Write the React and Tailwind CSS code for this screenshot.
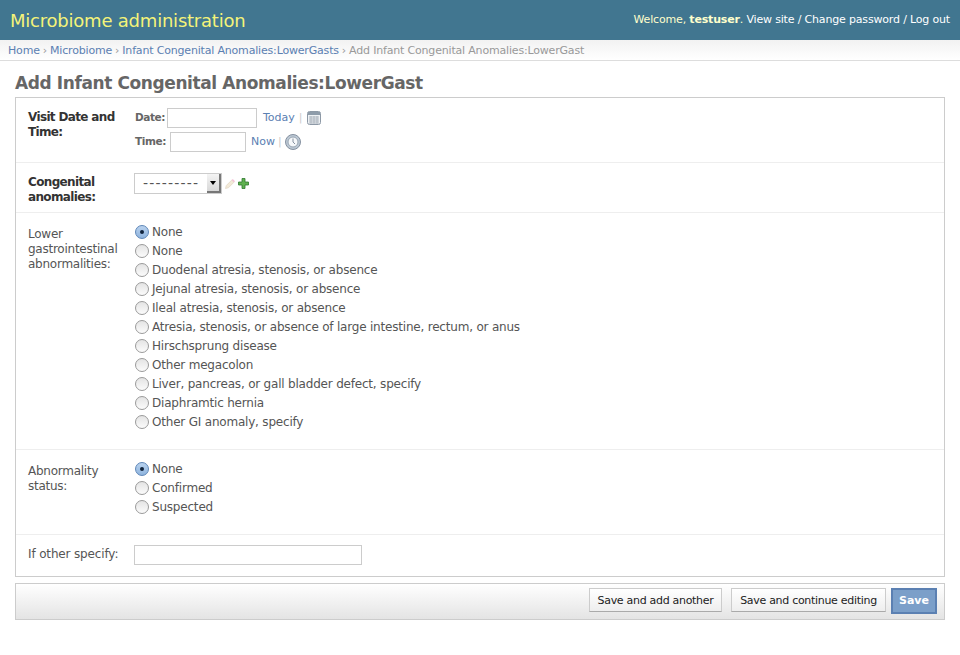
// Django admin add form: header, breadcrumbs, fieldset rows, submit bar
const gastroOptions = [
  'None',
  'None',
  'Duodenal atresia, stenosis, or absence',
  'Jejunal atresia, stenosis, or absence',
  'Ileal atresia, stenosis, or absence',
  'Atresia, stenosis, or absence of large intestine, rectum, or anus',
  'Hirschsprung disease',
  'Other megacolon',
  'Liver, pancreas, or gall bladder defect, specify',
  'Diaphramtic hernia',
  'Other GI anomaly, specify',
];

const statusOptions = ['None', 'Confirmed', 'Suspected'];

const Radio = ({ checked }) => (
  <span className={`w-[14px] h-[14px] rounded-full shrink-0 flex items-center justify-center border ${checked ? 'border-[#5d86b8] bg-gradient-to-b from-[#b9d2ee] to-[#8fb4de]' : 'border-[#9a9a9a] bg-gradient-to-b from-[#e4e4e4] to-[#fbfbfb]'}`}>
    {checked && <span className="w-[4px] h-[4px] rounded-full bg-[#10233c]"></span>}
  </span>
);

const RadioList = ({ options }) => (
  <ul className="flex flex-col">
    {options.map((label, i) => (
      <li key={i} className="h-[19px] flex items-center gap-[3px] pl-[1px] text-[12px] tracking-[-0.2px] text-[#555]">
        <Radio checked={i === 0} />
        <span>{label}</span>
      </li>
    ))}
  </ul>
);

const CalendarIcon = () => (
  <svg width="16" height="16" viewBox="0 0 16 16">
    <rect x="1.5" y="1.5" width="13" height="13" rx="2" fill="#eef1f4" stroke="#8d99a6" />
    <rect x="2" y="2" width="12" height="3" fill="#8e9caa" />
    <path d="M3 7h10M3 9h10M3 11h10M3 13h10M5 6v7.5M8 6v7.5M11 6v7.5" stroke="#aeb6bf" strokeWidth="1" />
  </svg>
);

const ClockIcon = () => (
  <svg width="16" height="16" viewBox="0 0 16 16">
    <circle cx="8" cy="8" r="7.5" fill="#bcc8d4" stroke="#8591a0" />
    <circle cx="8" cy="8" r="5" fill="#f6f8fa" stroke="#98a5b3" />
    <path d="M8 4.5v3.5l2 2" fill="none" stroke="#8591a0" strokeWidth="1" />
  </svg>
);

const PencilIcon = () => (
  <svg width="12" height="12" viewBox="0 0 12 12">
    <path d="M1.5 10.5l.8-3 5.5-5.5 2.2 2.2-5.5 5.5z" fill="#f3ead8" stroke="#e3d8c6" strokeWidth="0.8" />
    <path d="M7.8 2l1-1 2.2 2.2-1 1z" fill="#f4bfd6" />
  </svg>
);

const PlusIcon = () => (
  <svg width="11" height="11" viewBox="0 0 11 11">
    <path d="M4 .5h3v3.5h3.5v3h-3.5v3.5h-3v-3.5h-3.5v-3h3.5z" fill="#5fb04f" stroke="#2f7a2f" strokeWidth="0.8" />
  </svg>
);

const App = () => {
  return (
    <div className="min-h-[655px] bg-white text-[12px] font-['DejaVu_Sans',sans-serif]">

      {/* header */}
      <div className="h-[40px] bg-[#417690] flex items-center justify-between pl-[10px] pr-[10px]">
        <h1 className="text-[18px] text-[#f4f379] tracking-[-0.22px]">Microbiome administration</h1>
        <div className="pt-[1px] text-[11px] tracking-[-0.17px] text-[#ffc]">
          Welcome, <strong className="font-bold">testuser</strong>.{' '}
          <span className="text-white">View site / Change password / Log out</span>
        </div>
      </div>

      {/* breadcrumbs */}
      <div className="h-[21px] pt-[2px] border-b border-[#ddd] bg-gradient-to-b from-[#f2f2f2] to-white pl-[8px] flex items-center text-[11px] tracking-[-0.18px] text-[#999]">
        <a className="text-[#5b80b2]">Home</a>
        <span className="mx-[3px]">›</span>
        <a className="text-[#5b80b2]">Microbiome</a>
        <span className="mx-[3px]">›</span>
        <a className="text-[#5b80b2]">Infant Congenital Anomalies:LowerGasts</a>
        <span className="mx-[3px]">›</span>
        <span>Add Infant Congenital Anomalies:LowerGast</span>
      </div>

      <div className="px-[15px]">
        <h2 className="h-[36px] flex items-center pt-[10px] text-[17px] tracking-[-0.4px] font-bold text-[#666]">Add Infant Congenital Anomalies:LowerGast</h2>

        {/* form module */}
        <div className="border border-[#ccc]">
          <div className="h-[65px] border-b border-[#eee] flex pl-[12px] pt-[10px]">
            <label className="w-[106px] pt-[2px] text-[12px] tracking-[-0.65px] font-bold text-[#333] leading-[15px]">Visit Date and Time:</label>
            <div className="flex flex-col gap-[4px]">
              <div className="flex items-center h-[20px] text-[#666]">
                <span className="font-bold text-[10.5px] tracking-[-0.4px] w-[33px] pl-[1px]">Date:</span>
                <span className="w-[90px] h-[20px] border border-[#ccc] bg-white"></span>
                <a className="ml-[6px] text-[11px] text-[#5b80b2]">Today</a>
                <span className="ml-[4px] mr-[3px] text-[#ccc] text-[11px]">|</span>
                <CalendarIcon />
              </div>
              <div className="flex items-center h-[20px] text-[#666]">
                <span className="font-bold text-[10.5px] tracking-[-0.4px] w-[36px] pl-[1px]">Time:</span>
                <span className="w-[76px] h-[20px] border border-[#ccc] bg-white"></span>
                <a className="ml-[5px] text-[11px] text-[#5b80b2]">Now</a>
                <span className="ml-[3px] mr-[3px] text-[#ccc] text-[11px]">|</span>
                <ClockIcon />
              </div>
            </div>
          </div>

          <div className="h-[50px] border-b border-[#eee] flex pl-[12px] pt-[10px]">
            <label className="w-[106px] pt-[2px] text-[12px] tracking-[-0.65px] font-bold text-[#333] leading-[15px]">Congenital anomalies:</label>
            <div className="flex items-start">
              <div className="w-[88px] h-[21px] border border-[#ccc] bg-white flex">
                <span className="flex-1 pl-[8px] text-[14px] tracking-[1.2px] leading-[18px] text-[#555]">---------</span>
                <span className="w-[14px] bg-gradient-to-b from-[#f4f4f4] to-[#d8d8d8] border-r-2 border-b-2 border-[#777] flex items-center justify-center">
                  <span className="border-x-[3px] border-t-[4px] border-x-transparent border-t-black"></span>
                </span>
              </div>
              <span className="ml-[2px] mt-[5px]"><PencilIcon /></span>
              <span className="ml-[2px] mt-[5px]"><PlusIcon /></span>
            </div>
          </div>

          <div className="h-[237px] border-b border-[#eee] flex pl-[12px] pt-[9px]">
            <label className="w-[106px] text-[#555] tracking-[-0.25px] leading-[15px] pt-[5px]">Lower gastrointestinal abnormalities:</label>
            <RadioList options={gastroOptions} />
          </div>

          <div className="h-[85px] border-b border-[#eee] flex pl-[12px] pt-[9px]">
            <label className="w-[106px] text-[#555] tracking-[-0.25px] leading-[15px] pt-[5px]">Abnormality status:</label>
            <RadioList options={statusOptions} />
          </div>

          <div className="h-[41px] flex pl-[12px] pt-[10px]">
            <label className="w-[106px] text-[#555] tracking-[-0.15px] leading-[18px]">If other specify:</label>
            <span className="w-[228px] h-[20px] border border-[#ccc] bg-white"></span>
          </div>
        </div>

        {/* submit row */}
        <div className="mt-[6px] h-[37px] border border-[#ccc] bg-gradient-to-b from-white to-[#e4e4e4] flex items-start justify-end pt-[4px] pr-[7px]">
          <button className="h-[24px] w-[133px] pt-[2px] bg-gradient-to-b from-white to-[#eee] border border-[#ccc] border-b-[#aaa] text-[11px] tracking-[-0.3px] text-[#222]">Save and add another</button>
          <button className="ml-[9px] h-[24px] w-[155px] pt-[2px] bg-gradient-to-b from-white to-[#eee] border border-[#ccc] border-b-[#aaa] text-[11px] tracking-[-0.3px] text-[#222]">Save and continue editing</button>
          <button className="ml-[5px] h-[26px] w-[46px] bg-[#7b9fc9] border-2 border-[#5b80b2] text-[11px] font-bold text-white">Save</button>
        </div>
      </div>
    </div>
  );
};

export default App;
